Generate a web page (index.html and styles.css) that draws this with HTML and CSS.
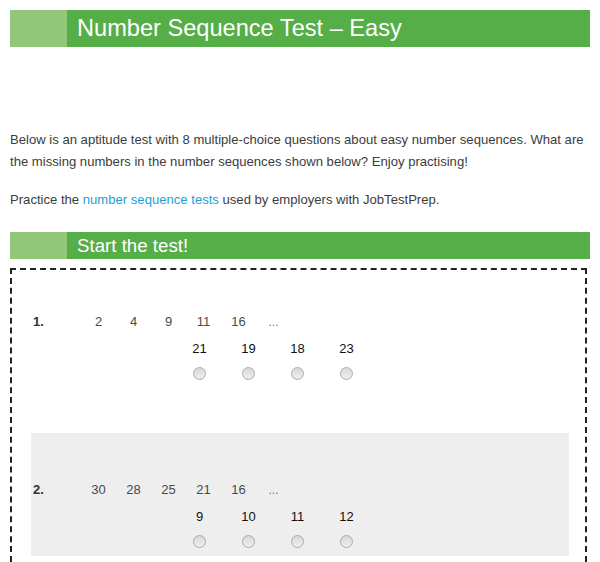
FILE: index.html
```html
<!DOCTYPE html>
<html lang="en">
<head>
<meta charset="utf-8">
<title>Number Sequence Test – Easy</title>
<link rel="stylesheet" href="styles.css">
</head>
<body>
<div class="page">
  <h1 class="bar bar-title"><span class="bar-accent"></span><span class="bar-text">Number Sequence Test – Easy</span></h1>

  <div class="intro">
    <p>Below is an aptitude test with 8 multiple-choice questions about easy number sequences. What are the missing numbers in the number sequences shown below? Enjoy practising!</p>
    <p>Practice the <a href="#">number sequence tests</a> used by employers with JobTestPrep.</p>
  </div>

  <h2 class="bar bar-sub"><span class="bar-accent"></span><span class="bar-text">Start the test!</span></h2>

  <div class="test">
    <div class="q q-first">
      <div class="seq">
        <span class="lbl">1.</span>
        <span class="n">2</span><span class="n">4</span><span class="n">9</span><span class="n">11</span><span class="n">16</span><span class="n dots">...</span>
      </div>
      <div class="opts">
        <label class="opt"><span class="opt-val">21</span><span class="radio"></span></label>
        <label class="opt"><span class="opt-val">19</span><span class="radio"></span></label>
        <label class="opt"><span class="opt-val">18</span><span class="radio"></span></label>
        <label class="opt"><span class="opt-val">23</span><span class="radio"></span></label>
      </div>
    </div>
    <div class="q q-alt">
      <div class="seq">
        <span class="lbl">2.</span>
        <span class="n">30</span><span class="n">28</span><span class="n">25</span><span class="n">21</span><span class="n">16</span><span class="n dots">...</span>
      </div>
      <div class="opts">
        <label class="opt"><span class="opt-val">9</span><span class="radio"></span></label>
        <label class="opt"><span class="opt-val">10</span><span class="radio"></span></label>
        <label class="opt"><span class="opt-val">11</span><span class="radio"></span></label>
        <label class="opt"><span class="opt-val">12</span><span class="radio"></span></label>
      </div>
    </div>
  </div>
</div>
</body>
</html>
```
FILE: styles.css
```css
html, body {
  margin: 0;
  padding: 0;
  background: #ffffff;
}
body {
  font-family: "Liberation Sans", Arial, sans-serif;
  color: #3c3c3c;
  font-size: 13px;
}
.page {
  padding: 10px 10px 0;
}
.bar {
  display: flex;
  margin: 0;
  background: #55ae48;
  color: #ffffff;
  font-weight: normal;
}
.bar-accent {
  width: 57px;
  flex: none;
  background: #92c679;
}
.bar-text {
  padding-left: 10px;
  white-space: nowrap;
}
.bar-title {
  height: 37px;
  font-size: 23.6px;
  line-height: 37px;
}
.bar-sub {
  height: 27px;
  font-size: 18.7px;
  line-height: 27px;
  margin-top: 21px;
}
.intro {
  margin-top: 82px;
}
.intro p {
  margin: 0;
  line-height: 22px;
  font-size: 13.1px;
}
.intro p + p {
  margin-top: 16px;
}
.intro a {
  color: #1e9fd3;
  text-decoration: none;
}
.test {
  margin-top: 9px;
  margin-right: 3px;
  border: 2px dashed #222222;
  border-bottom: none;
  padding-bottom: 6px;
}
.q {
  margin: 0 16px 0 19px;
  padding: 47px 0 8px;
  height: 123px;
  box-sizing: border-box;
  font-size: 13px;
}
.q-first {
  padding-top: 42px;
  height: 118px;
}
.q-alt {
  margin-top: 45px;
  background: #eeeeee;
}
.seq {
  display: flex;
  align-items: center;
  height: 20px;
  line-height: 20px;
  color: #4a4a4a;
}
.lbl {
  width: 48px;
  padding-left: 2px;
  font-weight: bold;
  color: #333333;
}
.n {
  width: 35px;
  text-align: center;
}
.dots {
  color: #777777;
  font-size: 12px;
}
.opts {
  display: flex;
  margin-top: 7px;
  padding-left: 144px;
}
.opt {
  width: 49px;
  display: flex;
  flex-direction: column;
  align-items: center;
}
.opt-val {
  line-height: 20px;
  color: #111111;
}
.radio {
  margin-top: 8px;
  width: 11px;
  height: 11px;
  border-radius: 50%;
  border: 1px solid #ababab;
  background: linear-gradient(#d8d8d8, #efefef);
}
```
